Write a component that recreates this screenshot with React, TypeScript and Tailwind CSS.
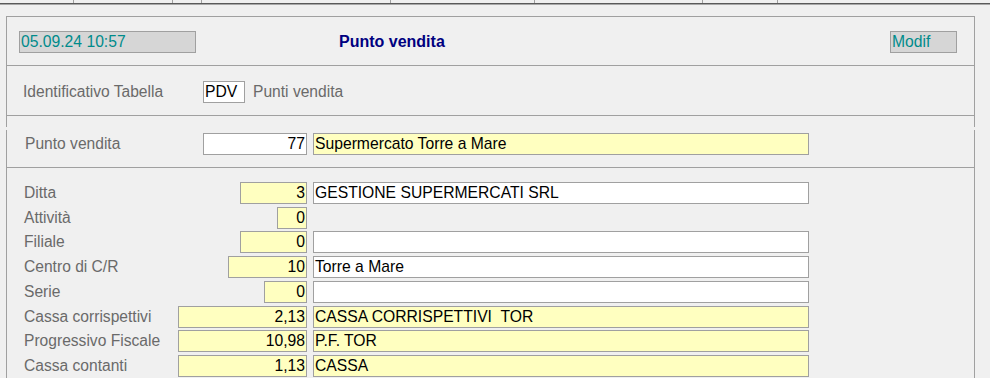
import React from "react";

const font = { fontFamily: '"Liberation Sans", Arial, sans-serif' };

// top tab strip separators (width of each segment, border on its right)
const tabs = [74, 99, 29, 189, 144, 168, 75];

type Row = {
   label: string;
   num: string;
   numW: string;
   desc?: string;
   descBg?: "white" | "yellow";
   gap: string;
};

const rows: Row[] = [
   { label: "Ditta", num: "3", numW: "w-[67px]", desc: "GESTIONE SUPERMERCATI SRL", descBg: "white", gap: "mt-0" },
   { label: "Attività", num: "0", numW: "w-[30px]", gap: "mt-[3px]" },
   { label: "Filiale", num: "0", numW: "w-[67px]", desc: "", descBg: "white", gap: "mt-[2px]" },
   { label: "Centro di C/R", num: "10", numW: "w-[79px]", desc: "Torre a Mare", descBg: "white", gap: "mt-[3px]" },
   { label: "Serie", num: "0", numW: "w-[43px]", desc: "", descBg: "white", gap: "mt-[3px]" },
   { label: "Cassa corrispettivi", num: "2,13", numW: "w-[129px]", desc: "CASSA CORRISPETTIVI  TOR", descBg: "yellow", gap: "mt-[3px]" },
   { label: "Progressivo Fiscale", num: "10,98", numW: "w-[129px]", desc: "P.F. TOR", descBg: "yellow", gap: "mt-[2px]" },
   { label: "Cassa contanti", num: "1,13", numW: "w-[129px]", desc: "CASSA", descBg: "yellow", gap: "mt-[3px]" },
];

const Field = ({
   value,
   className,
   right,
}: {
   value: string;
   className: string;
   right?: boolean;
}) => (
   <div
      className={`flex h-[22px] items-center whitespace-pre border border-[#a0a0a0] text-[15.7px] leading-none text-black ${
         right ? "justify-end pr-[1px]" : "pl-[1px]"
      } ${className}`}
   >
      {value}
   </div>
);

export default function App() {
   return (
      <div className="h-[378px] w-[990px] overflow-hidden bg-[#f0f0f0]" style={font}>
         {/* tab strip */}
         <div className="flex h-[3px]">
            {tabs.map((w, i) => (
               <div
                  key={i}
                  className="border-r border-[#a0a0a0]"
                  style={{ width: w }}
               />
            ))}
         </div>
         <div className="h-px bg-[#5a5a5a]" />
         <div className="h-px bg-[#a8a8a8]" />

         {/* header panel */}
         <div className="ml-[6px] mt-[11px] w-[969px] border-x border-t border-[#a0a0a0]">
            <div className="flex h-[49px] items-start border-b border-[#a0a0a0] pt-[14px]">
               <div className="ml-[12px] flex h-[22px] w-[177px] items-center border border-[#a0a0a0] bg-[#d6d6d6] pl-[1px] text-[15.7px] leading-none text-[#008b8b]">
                  05.09.24 10:57
               </div>
               <div className="ml-[143px] flex h-[22px] items-center text-[16px] font-bold leading-none text-[#000080]">
                  Punto vendita
               </div>
               <div className="ml-auto mr-[17px] flex h-[22px] w-[67px] items-center border border-[#a0a0a0] bg-[#d6d6d6] pl-[1px] text-[15.7px] leading-none text-[#008b8b]">
                  Modif
               </div>
            </div>

            <div className="flex h-[50px] items-start border-b border-[#a0a0a0] pt-[15px]">
               <div className="flex h-[22px] w-[196px] items-center pl-[16px] text-[15.6px] leading-none text-[#6a6a6a]">
                  Identificativo Tabella
               </div>
               <Field value="PDV" className="w-[42px] bg-white" />
               <div className="ml-[8px] flex h-[22px] items-center text-[15.6px] leading-none text-[#6a6a6a]">
                  Punti vendita
               </div>
            </div>
            <div className="h-[11px]" />
         </div>

         {/* data panel */}
         <div className="ml-[6px] mt-[3px] w-[969px] border-x border-[#a0a0a0]">
            <div className="flex h-[38px] items-start border-b border-[#a0a0a0] pt-[3px]">
               <div className="flex h-[22px] w-[196px] items-center pl-[18px] text-[15.6px] leading-none text-[#6a6a6a]">
                  Punto vendita
               </div>
               <Field value="77" right className="w-[104px] bg-white" />
               <Field value="Supermercato Torre a Mare" className="ml-[6px] w-[496px] bg-[#ffffc0]" />
            </div>

            <div className="flex flex-col pt-[14px] pb-4">
               {rows.map((r) => (
                  <div key={r.label} className={`flex h-[22px] ${r.gap}`}>
                     <div className="flex w-[300px] items-center justify-between">
                        <div className="pl-[17px] text-[15.6px] leading-none text-[#6a6a6a]">
                           {r.label}
                        </div>
                        <Field value={r.num} right className={`${r.numW} bg-[#ffffc0]`} />
                     </div>
                     {r.desc !== undefined && (
                        <Field
                           value={r.desc}
                           className={`ml-[6px] w-[496px] ${
                              r.descBg === "yellow" ? "bg-[#ffffc0]" : "bg-white"
                           }`}
                        />
                     )}
                  </div>
               ))}
            </div>
         </div>
      </div>
   );
}
